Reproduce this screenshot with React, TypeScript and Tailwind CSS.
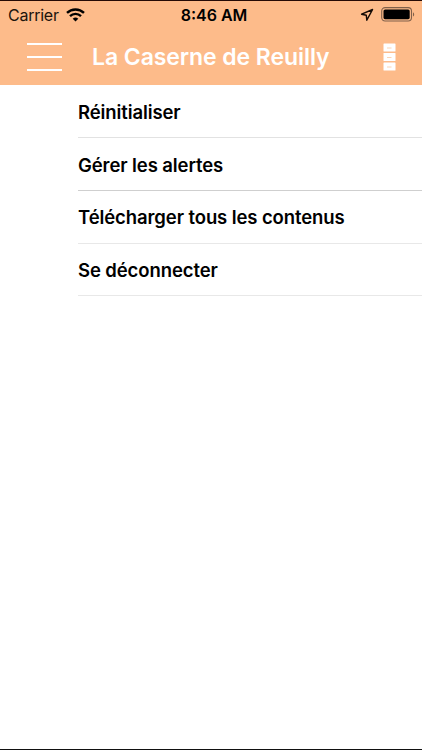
const MENU_ITEMS = [
  { label: 'Réinitialiser', className: 'h-[53px] border-[#e2e2e2] pt-[2px]' },
  { label: 'Gérer les alertes', className: 'h-[53px] border-[#cfcfcf] pt-[2px]' },
  { label: 'Télécharger tous les contenus', className: 'h-[53px] border-[#e8e8e8] pt-px' },
  { label: 'Se déconnecter', className: 'h-[52px] border-[#e8e8e8] pt-[2px]' },
];

function WifiIcon() {
  return (
    <svg className="h-[14px] w-[19px]" viewBox="0 0 19 14" fill="none" stroke="#000" strokeWidth="2.4">
      <path d="M1 4.9a12.2 12.2 0 0 1 17 0" />
      <path d="M4 8.1a7.9 7.9 0 0 1 11 0" />
      <path d="M6.7 10.7a4.1 4.1 0 0 1 5.6 0L9.5 13.5Z" fill="#000" stroke="none" />
    </svg>
  );
}

function LocationIcon() {
  return (
    <svg className="h-[14px] w-[14px]" viewBox="0 0 14 14" fill="none" stroke="#140a05" strokeWidth="1.4" strokeLinejoin="round">
      <path d="M12.6 1.5 1.6 6.2l4.7 1.1.5 4.9Z" />
    </svg>
  );
}

function BatteryIcon() {
  return (
    <svg className="h-[15px] w-[35px]" viewBox="0 0 35 15" fill="none">
      <rect x="0.7" y="0.6" width="29.8" height="13.4" rx="3.4" stroke="#80604a" strokeWidth="1.1" />
      <rect x="2.5" y="2.4" width="26.2" height="9.8" rx="1.6" fill="#000" />
      <path d="M32 5.2c1.6.7 1.6 3.7 0 4.4Z" fill="#80604a" />
    </svg>
  );
}

function DrawersIcon() {
  return (
    <svg className="h-[28px] w-[13px]" viewBox="0 0 13 28">
      {[0.5, 10, 19.5].map((y) => (
        <g key={y}>
          <rect x="0.5" y={y} width="12" height="8" rx="0.6" fill="#fff" />
          <path d={`M4 ${y + 4.5}h4.5`} stroke="#fbcfab" strokeWidth="0.9" />
        </g>
      ))}
    </svg>
  );
}

export default function App() {
  return (
    <div className="flex h-[750px] w-[422px] flex-col overflow-hidden border-y border-t-[#260a05] border-b-[#111] bg-white font-['Inter','Liberation_Sans',sans-serif] text-black">
      <header className="h-[84px] shrink-0 bg-[#fdbb8a]">
        {/* Status bar */}
        <div className="grid h-[27px] grid-cols-3 items-center pr-[6px] pl-[8px] text-[16px] leading-none">
          <div className="flex items-center gap-[7px]">
            <span className="w-[51px] tracking-[-0.25px] whitespace-nowrap text-[#20140c]">Carrier</span>
            <WifiIcon />
          </div>
          <span className="pl-[4px] text-center font-semibold whitespace-nowrap">8:46 AM</span>
          <div className="flex items-center justify-end gap-[7px]">
            <LocationIcon />
            <BatteryIcon />
          </div>
        </div>

        {/* Navigation bar */}
        <div className="flex h-[57px] items-center pl-[27px] text-white">
          <button aria-label="Menu" className="flex w-[35px] shrink-0 flex-col gap-[11px]">
            <span className="h-[2px] bg-white" />
            <span className="h-[2px] bg-white" />
            <span className="h-[2px] bg-white" />
          </button>
          <h1 className="ml-[30px] w-[291px] pt-px text-[23px] leading-none font-semibold tracking-[-0.08px] whitespace-nowrap">
            La Caserne de Reuilly
          </h1>
          <button aria-label="Options" className="shrink-0">
            <DrawersIcon />
          </button>
        </div>
      </header>

      <ul className="pl-[78px]">
        {MENU_ITEMS.map((item) => (
          <li
            key={item.label}
            className={`flex items-center border-b text-[18.5px] leading-none font-semibold tracking-[-0.1px] whitespace-nowrap ${item.className}`}
          >
            {item.label}
          </li>
        ))}
      </ul>
    </div>
  );
}
